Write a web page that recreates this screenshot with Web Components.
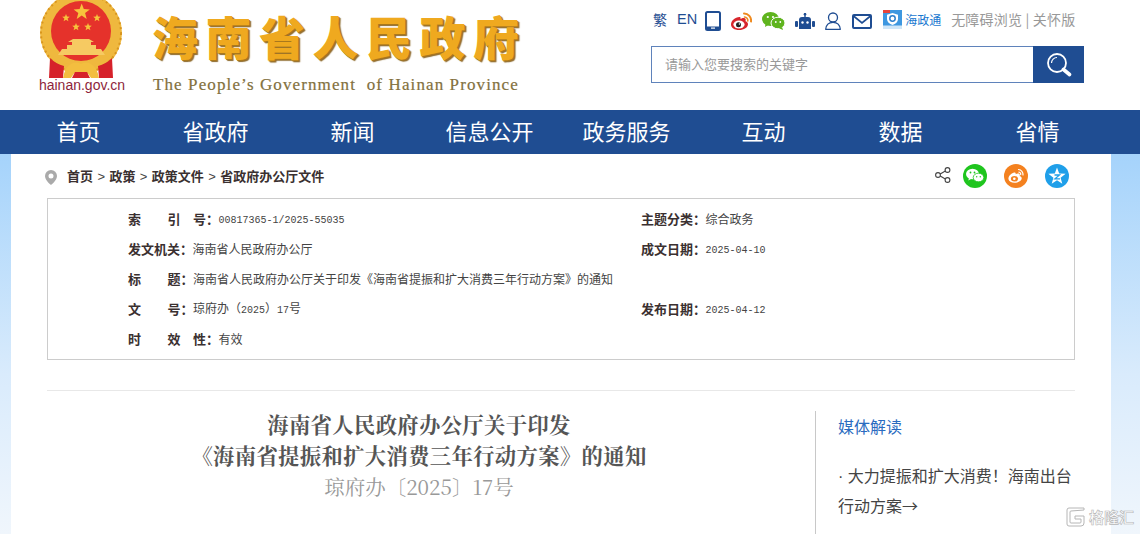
<!DOCTYPE html>
<html lang="zh">
<head>
<meta charset="utf-8">
<title>海南省人民政府</title>
<style>
  html, body { margin: 0; height: 534px; overflow: hidden; }
  body { background: #fff; font-family: "Noto Sans CJK SC", "Liberation Sans", sans-serif; }
</style>
</head>
<body>
<site-page>
  <site-header></site-header>
  <site-nav></site-nav>
  <page-body></page-body>
</site-page>
<water-mark></water-mark>

<script>
const CJK = `"Noto Sans CJK SC", "Liberation Sans", sans-serif`;
const SERIF = `"Noto Serif CJK SC", "Liberation Serif", "Noto Sans CJK SC", serif`;

// 五角星, 国徽和分享图标都用
function star(cx, cy, r, fill) {
  const pts = [];
  for (let i = 0; i < 10; i++) {
    const a = -Math.PI / 2 + (i * Math.PI) / 5;
    const d = i % 2 ? r * 0.42 : r;
    pts.push((cx + d * Math.cos(a)).toFixed(1) + "," + (cy + d * Math.sin(a)).toFixed(1));
  }
  return `<polygon points="${pts.join(" ")}" fill="${fill}"/>`;
}

class SitePage extends HTMLElement {
  constructor() {
    super();
    this.attachShadow({ mode: "open" });
    this.shadowRoot.innerHTML = `
    <style>
      :host { display: block; width: 1140px; height: 534px; overflow: hidden; }
    </style>
    <slot></slot>`;
  }
}

class SiteHeader extends HTMLElement {
  constructor() {
    super();
    this.attachShadow({ mode: "open" });
    this.shadowRoot.innerHTML = `
    <style>
      :host { display: flex; height: 110px; background: #fff; font-family: ${CJK}; overflow: hidden; }
      .emblem { width: 90px; margin-left: 37px; flex: none; display: flex; flex-direction: column; align-items: center; }
      .emblem svg { display: block; margin-top: -4px; }
      .emblem span { font: 14px/14px "Liberation Sans", sans-serif; color: #8e1f3c; white-space: nowrap; }
      .brand { margin-left: 25px; width: 400px; flex: none; }
      .cn { font: 900 46px/50px ${CJK}; letter-spacing: 7.5px; color: #efa91f; margin-top: 10px; white-space: nowrap;
            text-shadow: 1px 1px 0 #a9781c, 2px 2px 1px #8d6a2c; }
      .en { font: 17px/20px "Liberation Serif", serif; color: #83713e; letter-spacing: 1.11px; margin: 15px 0 0 1px; white-space: pre; -webkit-text-stroke: .2px #83713e; }
      .right { margin-left: auto; width: 489px; flex: none; }
      .tools { display: flex; align-items: center; height: 24px; margin-top: 9px; font-size: 14px; color: #999; white-space: nowrap; }
      .tools svg { display: block; flex: none; }
      .tools span { margin-bottom: 4px; }
      .fan { color: #1f4d92; font-size: 14px; margin-left: 2px; }
      .en-link { color: #1f4d92; margin-left: 10px; font-family: "Liberation Sans", sans-serif; font-size: 14.5px; }
      .hzt { color: #1a78d0; font-size: 12px; margin-left: 3px; }
      .care { margin-left: 10px; letter-spacing: .2px; }
      .search { display: flex; width: 433px; height: 37px; margin-top: 13px; box-sizing: border-box; }
      .input { flex: 1; border: 1px solid #5f83bb; border-right: none; font-size: 13px; line-height: 33px; color: #999; padding-left: 13px; }
      .btn { width: 51px; flex: none; background: #1f4d92; display: flex; align-items: center; justify-content: center; }
    </style>
    <div class="emblem">
      <svg width="84" height="82" viewBox="0 0 84 82">
        <circle cx="41" cy="37" r="41" fill="#efb83e"/>
        <circle cx="41" cy="37" r="40" fill="none" stroke="#d8951f" stroke-width="2" stroke-dasharray="2 3"/>
        <circle cx="41" cy="35" r="30" fill="#e5322b"/>
        ${star(41.7, 16, 8.5, "#f7c33c")}
        ${star(26, 22, 4, "#f7c33c")}
        ${star(57, 22, 4, "#f7c33c")}
        ${star(36, 31, 4, "#f7c33c")}
        ${star(48, 31, 4, "#f7c33c")}
        <path d="M28 46l5-3h16l5 3h-3v3h5v4h5l4 6H18l4-6h5v-4h5v-3z" fill="#f6ca62"/>
        <path d="M14 60q27 10 54 0l1 4q-28 10-56 0z" fill="#efb83e"/>
        <path d="M10 62q6 6 14 8l-1 12H9z" fill="#d6212a"/>
        <path d="M72 62q-6 6-14 8l1 12h14z" fill="#d6212a"/>
        <path d="M23 82q2-11 8-14 5-3 10 0 5-3 10 0 6 3 8 14h-8l-4-6H35l-4 6z" fill="#f3be3f"/>
        <path d="M35 76h12l3 6H32z" fill="#d6212a"/>
      </svg>
      <span>hainan.gov.cn</span>
    </div>
    <div class="brand">
      <div class="cn">海南省人民政府</div>
      <div class="en">The People’s Government  of Hainan Province</div>
    </div>
    <div class="right">
      <div class="tools">
        <span class="fan">繁</span>
        <span class="en-link">EN</span>
        <svg style="margin-left:8px" width="16" height="20" viewBox="0 0 16 20"><rect x="1" y="1" width="14" height="18" rx="1.500" fill="none" stroke="#1f4d92" stroke-width="2"/><rect x="1" y="15.500" width="14" height="3.500" fill="#1f4d92"/><rect x="6" y="16.500" width="4" height="1.200" fill="#fff"/></svg>
        <svg style="margin-left:10px" width="21" height="18" viewBox="0 0 21 18"><path d="M8.500 5C4 5 0 9 0 12.500 0 15.800 3.500 18 8 18c5 0 9-2.800 9-5.800 0-1.800-1.500-2.600-2.500-2.900.5-1.500.4-3-1.800-3.200-1 0-2.500.5-3.200 1 .2-1.500 0-2.100-1-2.100z" fill="#d8262c"/><ellipse cx="8" cy="12.500" rx="5.600" ry="4" fill="#fff"/><circle cx="7.500" cy="12.800" r="2.500" fill="#222"/><circle cx="8.400" cy="12" r=".7" fill="#fff"/><path d="M13 1.500a7 7 0 0 1 7 8" fill="none" stroke="#ef8a1e" stroke-width="2" stroke-linecap="round"/><path d="M13.500 5a3.500 3.500 0 0 1 3.300 4" fill="none" stroke="#ef8a1e" stroke-width="1.600" stroke-linecap="round"/></svg>
        <svg style="margin-left:10px" width="23" height="18" viewBox="0 0 23 18"><ellipse cx="8.500" cy="7" rx="8.500" ry="7" fill="#5fb41e"/><path d="M3.500 11.500L3 15l4-2.500z" fill="#5fb41e"/><ellipse cx="16" cy="11" rx="7" ry="5.800" fill="#5fb41e" stroke="#fff" stroke-width="1"/><path d="M20 15l1 3-4-1.800z" fill="#5fb41e"/><circle cx="5.800" cy="5" r="1.100" fill="#fff"/><circle cx="11" cy="5" r="1.100" fill="#fff"/><circle cx="13.800" cy="10" r=".9" fill="#fff"/><circle cx="18.300" cy="10" r=".9" fill="#fff"/></svg>
        <svg style="margin-left:10px" width="20" height="17" viewBox="0 0 20 17"><rect x="9.300" y="0" width="1.400" height="4" fill="#1f4d92"/><circle cx="10" cy="1.200" r="1.300" fill="#1f4d92"/><path d="M4 16v-9q0-3 3-3h6q3 0 3 3v9z" fill="#1f4d92"/><rect x="0" y="8" width="3" height="6" rx="1" fill="#1f4d92"/><rect x="17" y="8" width="3" height="6" rx="1" fill="#1f4d92"/><circle cx="7.500" cy="9.500" r="1.200" fill="#fff"/><circle cx="12.500" cy="9.500" r="1.200" fill="#fff"/></svg>
        <svg style="margin-left:10px" width="16" height="18" viewBox="0 0 16 18"><circle cx="8" cy="5.500" r="4.500" fill="none" stroke="#1f4d92" stroke-width="1.300"/><path d="M.7 17.300c.4-4.500 3.500-7 7.300-7s6.900 2.500 7.300 7z" fill="none" stroke="#1f4d92" stroke-width="1.300" stroke-linejoin="round"/></svg>
        <svg style="margin-left:11px" width="20" height="15" viewBox="0 0 20 15"><rect x="1" y="1" width="18" height="13" rx="1" fill="none" stroke="#1f4d92" stroke-width="2"/><path d="M1.500 2L10 9l8.500-7" fill="none" stroke="#1f4d92" stroke-width="1.700"/></svg>
        <svg style="margin-left:11px;margin-top:-3px" width="19" height="19" viewBox="0 0 19 19"><rect width="19" height="19" fill="#3d97e0"/><rect width="7" height="3" fill="#e7453a"/><rect y="15.500" width="19" height="3.500" fill="#cfe6f8"/><path d="M9.500 3l5.500 1.800v4.200c0 3-2.300 5-5.500 6-3.200-1-5.500-3-5.500-6V4.800z" fill="#fff"/><circle cx="9.500" cy="8.500" r="2.700" fill="none" stroke="#2c7fcc" stroke-width="1.500"/></svg>
        <span class="hzt">海政通</span>
        <span class="care">无障碍浏览 | 关怀版</span>
      </div>
      <div class="search">
        <div class="input">请输入您要搜索的关键字</div>
        <div class="btn">
          <svg width="26" height="26" viewBox="0 0 26 26"><circle cx="11" cy="11" r="9" fill="none" stroke="#fff" stroke-width="1.800"/><path d="M5.500 11a5.500 5.500 0 0 1 5.500-5.500" fill="none" stroke="#fff" stroke-width="1.200"/><path d="M17.500 17.500l6 5" stroke="#fff" stroke-width="3.600" stroke-linecap="round"/></svg>
        </div>
      </div>
    </div>`;
  }
}

class SiteNav extends HTMLElement {
  constructor() {
    super();
    this.attachShadow({ mode: "open" });
    const items = ["首页", "省政府", "新闻", "信息公开", "政务服务", "互动", "数据", "省情"];
    this.shadowRoot.innerHTML = `
    <style>
      :host { display: flex; height: 44px; background: #1f4d92; padding: 0 29px 0 10px; box-sizing: border-box; width: 1140px; overflow: hidden; }
      a { width: 137px; flex: none; text-align: center; color: #fff; font: 22px/41px ${CJK}; text-decoration: none; }
    </style>
    ${items.map((t) => `<a href="#">${t}</a>`).join("")}`;
  }
}

class ShareIcons extends HTMLElement {
  constructor() {
    super();
    this.attachShadow({ mode: "open" });
    this.shadowRoot.innerHTML = `
    <style>
      :host { display: flex; align-items: center; }
      svg { display: block; flex: none; }
      .c { margin-left: 17px; }
    </style>
    <svg width="16" height="16" viewBox="0 0 16 16" style="margin-right:-5px;margin-top:-2px"><g fill="none" stroke="#444" stroke-width="1.100"><circle cx="3" cy="8" r="2.400"/><circle cx="12.500" cy="3" r="2.400"/><circle cx="12.500" cy="13" r="2.400"/><path d="M5.200 6.900l5.100-2.800M5.200 9.100l5.100 2.800"/></g></svg>
    <svg width="24" height="24" viewBox="0 0 24 24" class="c"><circle cx="12" cy="12" r="12" fill="#1fc51e"/><ellipse cx="9.500" cy="10" rx="6.500" ry="5.300" fill="#fff"/><path d="M6 13.500l-.6 3 3-1.800z" fill="#fff"/><ellipse cx="15.500" cy="13.500" rx="5.300" ry="4.300" fill="#fff" stroke="#1fc51e" stroke-width=".8"/><circle cx="7.500" cy="8.500" r=".9" fill="#1fc51e"/><circle cx="11.500" cy="8.500" r=".9" fill="#1fc51e"/><circle cx="13.700" cy="12.800" r=".7" fill="#1fc51e"/><circle cx="17.300" cy="12.800" r=".7" fill="#1fc51e"/></svg>
    <svg width="24" height="24" viewBox="0 0 24 24" class="c"><circle cx="12" cy="12" r="12" fill="#f4811f"/><path d="M10 8.500c-3.300 1-6 4-5.500 6.800.5 2.700 4 4 7.500 3.400 3.400-.6 6-2.600 5.700-4.800-.2-1.200-1.200-1.800-2-2 .5-1.400-.2-2.500-1.800-2.300-.8 0-1.700.5-2.200.7.200-1.300-.4-2.200-1.700-1.800z" fill="#fff"/><ellipse cx="10.500" cy="14.800" rx="3.600" ry="2.700" fill="#f4811f"/><circle cx="10.300" cy="14.800" r="1.300" fill="#fff"/><path d="M14.500 5.500a5 5 0 0 1 4.500 5.500M14.800 8a2.400 2.400 0 0 1 1.900 2.700" fill="none" stroke="#fff" stroke-width="1.200" stroke-linecap="round"/></svg>
    <svg width="24" height="24" viewBox="0 0 24 24" class="c"><circle cx="12" cy="12" r="12" fill="#1f9fe9"/>${star(12, 12.500, 9, "#fff")}<path d="M9.500 11h5l-4.500 3.800h5" fill="none" stroke="#1f9fe9" stroke-width="1.300"/></svg>`;
  }
}

class BreadCrumb extends HTMLElement {
  constructor() {
    super();
    this.attachShadow({ mode: "open" });
    this.shadowRoot.innerHTML = `
    <style>
      :host { display: flex; align-items: center; height: 44px; padding-left: 45px; padding-right: 71px; font: 700 13px/18px ${CJK}; color: #3a3030; }
      svg { display: block; margin-right: 10px; margin-top: 2px; }
      i { font: 400 13px "Liberation Sans", sans-serif; color: #444; padding: 0 4.400px; }
      share-icons { margin-left: auto; }
    </style>
    <svg width="12" height="15" viewBox="0 0 12 15"><path fill-rule="evenodd" d="M6 0a6 6 0 0 1 6 6c0 3.500-4 7.500-6 9-2-1.500-6-5.500-6-9a6 6 0 0 1 6-6zm0 3.500a2.500 2.500 0 1 0 0 5 2.500 2.500 0 0 0 0-5z" fill="#aaa"/></svg>
    <span>首页</span><i>&gt;</i><span>政策</span><i>&gt;</i><span>政策文件</span><i>&gt;</i><span>省政府办公厅文件</span>
    <share-icons></share-icons>`;
  }
}

// 一行索引信息, parts 用 | 分开, 每段对应 label 的一个字位
class MetaCell extends HTMLElement {
  constructor() {
    super();
    this.attachShadow({ mode: "open" });
  }
  connectedCallback() {
    const parts = this.getAttribute("label").split("|");
    const label = parts.length === 1
      ? `<b class="full">${parts[0]}：</b>`
      : parts.map((p, i) => `<b style="width:${i === 0 ? 39.5 : 25.5}px">${p}${i === parts.length - 1 ? "：" : ""}</b>`).join("");
    this.shadowRoot.innerHTML = `
    <style>
      :host { display: flex; align-items: center; height: 30px; font: 12px/30px ${CJK}; color: #444; white-space: nowrap; }
      b { font-size: 13px; line-height: 30px; font-weight: 700; color: #3a3030; flex: none; white-space: nowrap; }
      b.full { width: 64.500px; }
      .val { display: block; }
      ::slotted(span) { font: 10px/30px "Liberation Mono", monospace; }
    </style>
    ${label}<div class="val"><slot></slot></div>`;
  }
}

class MetaTable extends HTMLElement {
  constructor() {
    super();
    this.attachShadow({ mode: "open" });
    this.shadowRoot.innerHTML = `
    <style>
      :host { display: grid; grid-template-columns: 513px 1fr; grid-auto-rows: 30px; align-content: start; box-sizing: border-box; width: 1028px; height: 162px; margin-left: 47px; border: 1px solid #ccc; padding: 5px 0 0 80px; background: #fff; }
    </style>
    <meta-cell label="索|引|号"><span>00817365-1/2025-55035</span></meta-cell>
    <meta-cell label="主题分类">综合政务</meta-cell>
    <meta-cell label="发文机关">海南省人民政府办公厅</meta-cell>
    <meta-cell label="成文日期"><span>2025-04-10</span></meta-cell>
    <meta-cell label="标|题" style="grid-column:1 / 3">海南省人民政府办公厅关于印发《海南省提振和扩大消费三年行动方案》的通知</meta-cell>
    <meta-cell label="文|号">琼府办（<span>2025</span>）<span>17</span>号</meta-cell>
    <meta-cell label="发布日期"><span>2025-04-12</span></meta-cell>
    <meta-cell label="时|效|性">有效</meta-cell>`;
  }
}

class DocTitle extends HTMLElement {
  constructor() {
    super();
    this.attachShadow({ mode: "open" });
    this.shadowRoot.innerHTML = `
    <style>
      :host { display: block; width: 744px; margin: -3px 0 0 47px; flex: none; text-align: center; font: 700 21.33px/31px ${SERIF}; letter-spacing: .35px; color: #555; white-space: nowrap; }
      .no { font-size: 20.500px; font-weight: 400; letter-spacing: 0; color: #999; margin-top: 1px; }
    </style>
    <div>海南省人民政府办公厅关于印发</div>
    <div>《海南省提振和扩大消费三年行动方案》的通知</div>
    <div class="no">琼府办〔2025〕17号</div>`;
  }
}

class SideBox extends HTMLElement {
  constructor() {
    super();
    this.attachShadow({ mode: "open" });
    this.shadowRoot.innerHTML = `
    <style>
      :host { display: block; margin-left: 24px; width: 238px; flex: none; box-sizing: border-box; border-left: 1px solid #c8c8c8; padding: 1px 0 0 22px; font: 16px/29px ${CJK}; color: #444; height: 200px; }
      h3 { margin: 0 0 20px; font: inherit; color: #2a6bc0; }
      p { margin: 0; width: 240px; }
      .dot { font-family: "Liberation Sans", sans-serif; }
    </style>
    <h3>媒体解读</h3>
    <p><span class="dot">· </span><span>大力提振和扩大消费！海南出台</span> <span>行动方案→</span></p>`;
  }
}

class PageBody extends HTMLElement {
  constructor() {
    super();
    this.attachShadow({ mode: "open" });
    this.shadowRoot.innerHTML = `
    <style>
      :host { display: block; height: 380px; box-sizing: border-box; padding: 0 29px 0 11px; width: 1140px;
              background: linear-gradient(#a5d3fb 0, #d9ebfc 220px, #f0f6fc 380px); }
      .panel { width: 1100px; height: 380px; background: #fff; }
      .inner { margin-left: -11px; width: 1140px; }
      hr { border: none; border-top: 1px solid #e8e8e8; width: 1028px; margin: 30px 0 20px 47px; }
      .cols { display: flex; }
    </style>
    <div class="panel"><div class="inner">
      <bread-crumb></bread-crumb>
      <meta-table></meta-table>
      <hr>
      <div class="cols">
        <doc-title></doc-title>
        <side-box></side-box>
      </div>
    </div></div>`;
  }
}

// 转载水印, 盖在页面右下角
class WaterMark extends HTMLElement {
  constructor() {
    super();
    this.attachShadow({ mode: "open" });
    this.shadowRoot.innerHTML = `
    <style>
      :host { position: absolute; left: 1066px; top: 507px; display: flex; align-items: center; gap: 3px; height: 20px; opacity: .85; }
      span { font: 700 15px/20px ${CJK}; color: #fff; -webkit-text-stroke: .6px #aaa; white-space: nowrap; }
    </style>
    <svg width="20" height="20" viewBox="0 0 20 20"><path d="M18 3V1H3Q1 1 1 3v14q0 2 2 2h12q3 0 3-3V9h-9v3h6v3q0 1-1 1H5q-1 0-1-1V5q0-1 1-1z" fill="#fff" stroke="#aaa" stroke-width="1"/></svg>
    <span>格隆汇</span>`;
  }
}

customElements.define("site-page", SitePage);
customElements.define("site-header", SiteHeader);
customElements.define("site-nav", SiteNav);
customElements.define("share-icons", ShareIcons);
customElements.define("bread-crumb", BreadCrumb);
customElements.define("meta-cell", MetaCell);
customElements.define("meta-table", MetaTable);
customElements.define("doc-title", DocTitle);
customElements.define("side-box", SideBox);
customElements.define("page-body", PageBody);
customElements.define("water-mark", WaterMark);
</script>
</body>
</html>
